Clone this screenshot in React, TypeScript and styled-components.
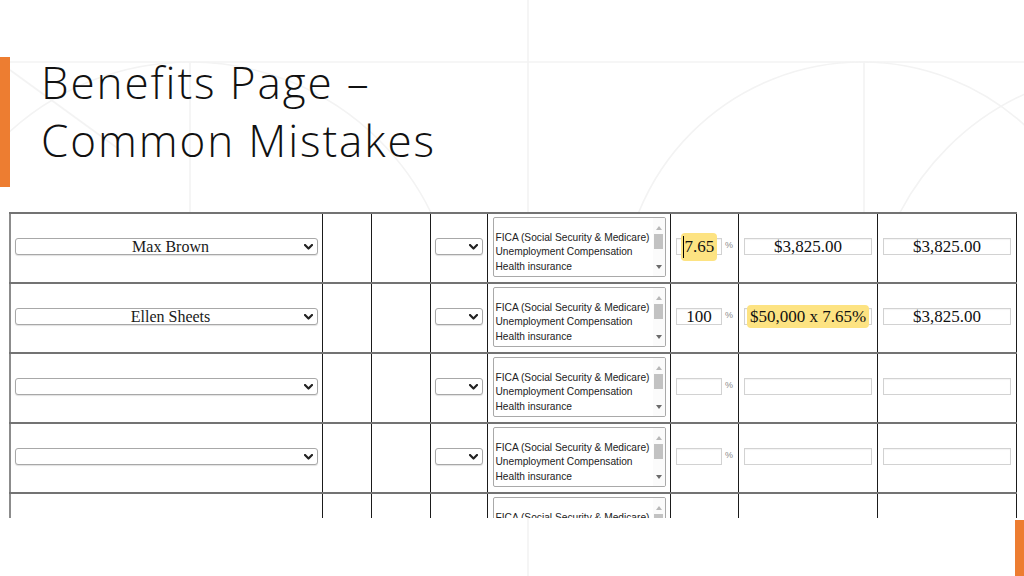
import React from "react";
import styled, { createGlobalStyle } from "styled-components";

const GlobalStyle = createGlobalStyle`
  html, body { margin: 0; padding: 0; background: #fff; }
  body { width: 1024px; height: 576px; overflow: hidden; }
  * { box-sizing: border-box; }
`;

const Slide = styled.div`
  position: relative;
  width: 1024px;
  height: 576px;
  overflow: hidden;
  background: #fff;
  display: flex;
  flex-direction: column;
`;

const Decor = styled.svg`
  position: absolute;
  inset: 0;
  width: 1024px;
  height: 576px;
  z-index: 0;
  pointer-events: none;
`;

const Header = styled.header`
  position: relative;
  z-index: 1;
  display: flex;
  align-items: flex-start;
  padding-top: 53px;
  height: 187px;
`;

const AccentBar = styled.div<{ $h: number; $top?: number }>`
  width: 10px;
  height: ${(p) => p.$h}px;
  margin-top: ${(p) => p.$top ?? 0}px;
  background: #ed7d31;
  flex-shrink: 0;
`;

const Title = styled.h1`
  margin: 0 0 0 31px;
  font-family: "Open Sans", "Liberation Sans", sans-serif;
  font-weight: 300;
  font-size: 44px;
  line-height: 58px;
  letter-spacing: 1.9px;
  color: #111;
`;

const Table = styled.div`
  position: relative;
  z-index: 1;
  margin: 25px 0 0 9px;
  width: 1008px;
  height: 306px;
  overflow: hidden;
  background: #fff;
`;

const Row = styled.div`
  display: grid;
  grid-template-columns: 313px 49px 59px 57px 183px 68px 139px 140px;
  height: 70px;
  border-top: 2px solid #737373;
`;

const Cell = styled.div<{ $first?: boolean; $last?: boolean }>`
  display: flex;
  align-items: center;
  justify-content: center;
  gap: 3px;
  padding-bottom: 3px;
  border-left: ${(p) => (p.$first ? "2px solid #8c8c8c" : "1px solid #1b1b1b")};
  border-right: ${(p) => (p.$last ? "1px solid #1b1b1b" : "none")};
`;

const SelectBox = styled.div<{ $w: number }>`
  width: ${(p) => p.$w}px;
  height: 17px;
  display: flex;
  align-items: center;
  border: 1px solid #a8a8a8;
  border-radius: 3px;
  box-shadow: 0 1px 1px rgba(0, 0, 0, 0.12);
  background: #fff;
  padding-right: 4px;
`;

const SelectText = styled.span`
  flex: 1;
  text-align: center;
  padding-left: 21px;
  font-family: "Liberation Serif", "Times New Roman", serif;
  font-size: 16px;
  line-height: 15px;
  color: #1a1a1a;
  white-space: nowrap;
`;

const Chevron = () => (
  <svg width="9" height="6" viewBox="0 0 9 6">
    <polyline points="1,1 4.5,4.5 8,1" fill="none" stroke="#222" strokeWidth="2.2" strokeLinecap="round" strokeLinejoin="round" />
  </svg>
);

const ListBox = styled.div`
  width: 173px;
  height: 60px;
  border: 1px solid #a9a9a9;
  border-radius: 2px;
  display: flex;
  background: #fff;
  overflow: hidden;
`;

const Options = styled.div<{ $top: number }>`
  flex: 1;
  padding: ${(p) => p.$top}px 0 0 2px;
  font-family: "Liberation Sans", Arial, sans-serif;
  font-size: 10.2px;
  line-height: 14.5px;
  color: #222;
  white-space: nowrap;
  overflow: hidden;
`;

const ScrollTrack = styled.div`
  width: 12px;
  display: flex;
  flex-direction: column;
  align-items: center;
  background: #fbfbfb;
`;

const Arrow = styled.div<{ $down?: boolean; $m: string }>`
  width: 0;
  height: 0;
  margin: ${(p) => p.$m};
  border-left: 3px solid transparent;
  border-right: 3px solid transparent;
  ${(p) =>
    p.$down
      ? "border-top: 4px solid #6a6a6a;"
      : "border-bottom: 4px solid #b8b8b8;"}
`;

const Thumb = styled.div`
  width: 9px;
  height: 15px;
  margin-top: 4px;
  background: #c2c2c2;
`;

const Spacer = styled.div`
  flex: 1;
`;

const Field = styled.div<{ $w: number }>`
  width: ${(p) => p.$w}px;
  height: 17px;
  border: 1px solid #d2d2d2;
  box-shadow: inset 0 1px 1px rgba(0, 0, 0, 0.05);
  display: flex;
  align-items: center;
  justify-content: center;
  font-family: "Liberation Serif", "Times New Roman", serif;
  font-size: 17px;
  color: #111;
  white-space: nowrap;
  background: #fff;
`;

const Highlight = styled.span`
  display: inline-flex;
  align-items: center;
  background: #fde382;
  border-radius: 4px;
  padding: 3px 3px;
  line-height: 17px;
`;

const Caret = styled.span`
  display: inline-block;
  width: 1px;
  height: 22px;
  background: #000;
  margin-right: 1px;
  margin-left: -1px;
`;

const Percent = styled.span`
  font-family: "Liberation Sans", Arial, sans-serif;
  font-size: 9px;
  color: #8c8c8c;
  margin-top: -3px;
`;

const Footer = styled.div`
  position: relative;
  z-index: 1;
  flex: 1;
  display: flex;
  justify-content: flex-end;
  align-items: flex-end;
`;

const CornerBar = styled.div`
  width: 9px;
  height: 56px;
  background: #ed7d31;
`;

type RowData = {
  name?: string;
  rate?: React.ReactNode;
  amount?: React.ReactNode;
  total?: string;
};

const rows: RowData[] = [
  {
    name: "Max Brown",
    rate: (
      <Highlight>
        <Caret />
        7.65
      </Highlight>
    ),
    amount: "$3,825.00",
    total: "$3,825.00",
  },
  {
    name: "Ellen Sheets",
    rate: "100",
    amount: <Highlight>$50,000 x 7.65%</Highlight>,
    total: "$3,825.00",
  },
  {},
  {},
  {},
];

const BenefitList = () => (
  <ListBox>
    <Options $top={13}>
      <div>FICA (Social Security &amp; Medicare)</div>
      <div>Unemployment Compensation</div>
      <div>Health insurance</div>
    </Options>
    <ScrollTrack>
      <Arrow $m="8px 0 0" />
      <Thumb />
      <Spacer />
      <Arrow $down $m="0 0 7px" />
    </ScrollTrack>
  </ListBox>
);

export default function App() {
  return (
    <>
      <GlobalStyle />
      <Slide>
        <Decor viewBox="0 0 1024 576">
          <defs>
            <clipPath id="upper">
              <rect x="0" y="0" width="1024" height="212" />
            </clipPath>
          </defs>
          <g fill="none" stroke="#f3f3f3" strokeWidth="1.6">
            <line x1="0" y1="62" x2="1024" y2="62" />
            <line x1="528" y1="0" x2="528" y2="576" />
            <g clipPath="url(#upper)">
              <line x1="864" y1="62" x2="864" y2="212" />
              <line x1="190" y1="62" x2="190" y2="212" />
              <circle cx="862" cy="303" r="241" />
              <circle cx="1135" cy="335" r="265" />
              <circle cx="190" cy="330" r="268" />
              <path d="M10 70 L120 150" />
            </g>
          </g>
        </Decor>
        <Header>
          <AccentBar $h={130} $top={4} />
          <Title>
            Benefits Page –<br />
            Common Mistakes
          </Title>
        </Header>
        <Table>
          {rows.map((r, i) => (
            <Row key={i}>
              <Cell $first>
                <SelectBox $w={303}>
                  <SelectText>{r.name ?? ""}</SelectText>
                  <Chevron />
                </SelectBox>
              </Cell>
              <Cell />
              <Cell />
              <Cell>
                <SelectBox $w={48}>
                  <SelectText />
                  <Chevron />
                </SelectBox>
              </Cell>
              <Cell>
                <BenefitList />
              </Cell>
              <Cell>
                <Field $w={46}>{r.rate ?? ""}</Field>
                <Percent>%</Percent>
              </Cell>
              <Cell>
                <Field $w={128}>{r.amount ?? ""}</Field>
              </Cell>
              <Cell $last>
                <Field $w={128}>{r.total ?? ""}</Field>
              </Cell>
            </Row>
          ))}
        </Table>
        <Footer>
          <CornerBar />
        </Footer>
      </Slide>
    </>
  );
}
